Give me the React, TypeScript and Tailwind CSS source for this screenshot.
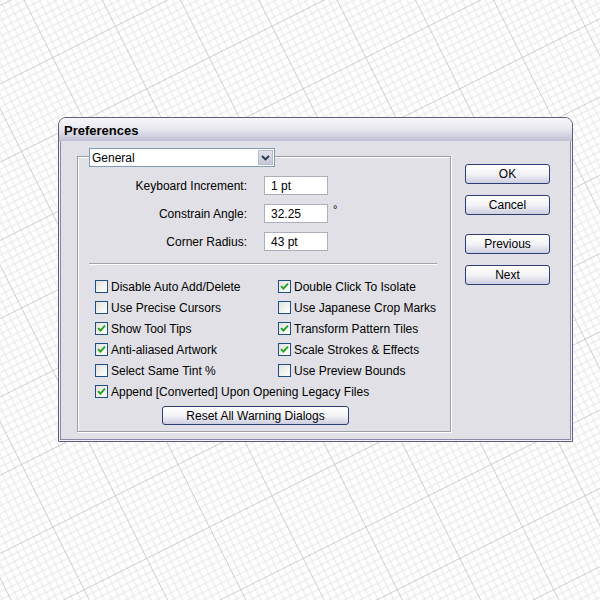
import React from "react";

const FONT = { fontFamily: '"Liberation Sans", Arial, sans-serif' };

function GridBackdrop() {
  const minor = Array.from({ length: 10 }, (_, i) => i * 7);
  return (
    <svg className="absolute inset-0" width={600} height={600}>
      <defs>
        <pattern
          id="paper"
          width={70}
          height={70}
          patternUnits="userSpaceOnUse"
          patternTransform="rotate(-26.57) translate(21 4.6)"
        >
          {minor.slice(1).map((p) => (
            <g key={p} stroke="#e5e5e5" strokeWidth={1}>
              <line x1={p} y1={0} x2={p} y2={70} />
              <line x1={0} y1={p} x2={70} y2={p} />
            </g>
          ))}
          <line x1={0} y1={0} x2={0} y2={70} stroke="#c2c2c2" strokeWidth={1.5} />
          <line x1={0} y1={0} x2={70} y2={0} stroke="#c2c2c2" strokeWidth={1.5} />
        </pattern>
      </defs>
      <rect width={600} height={600} fill="#ffffff" />
      <rect width={600} height={600} fill="url(#paper)" />
    </svg>
  );
}

function Btn({ label, className = "" }: { label: string; className?: string }) {
  return (
    <div
      className={
        "flex items-center justify-center rounded-[3px] border border-[#2c3e72] bg-gradient-to-b from-white via-[#f3f3f7] to-[#cdcee0] text-[12px] text-black " +
        className
      }
    >
      {label}
    </div>
  );
}

function Tick() {
  return (
    <svg width={9} height={9} viewBox="0 0 9 9">
      <path d="M1 4.2 L3.4 6.6 L8 1.6" fill="none" stroke="#22a322" strokeWidth={1.9} />
    </svg>
  );
}

function Check({ label, on }: { label: string; on?: boolean }) {
  return (
    <div className="flex h-[21px] items-center gap-[3px] whitespace-nowrap text-[12px] text-black">
      <div className="flex h-[13px] w-[13px] shrink-0 items-center justify-center border border-[#1f4f7e] bg-gradient-to-br from-[#e2e2dc] to-white">
        {on ? <Tick /> : null}
      </div>
      <span>{label}</span>
    </div>
  );
}

function Field({ label, value, unit }: { label: string; value: string; unit?: string }) {
  return (
    <div className="flex h-[19px] items-center text-[12px] text-black">
      <div className="w-[169px] text-right">{label}</div>
      <div className="ml-[17px] flex h-[19px] w-[64px] items-center border border-[#a9b0b9] bg-white pl-[6px]">
        {value}
      </div>
      {unit ? <div className="ml-[5px] -mt-[9px] text-[11px]">{unit}</div> : null}
    </div>
  );
}

export default function App() {
  return (
    <div className="relative h-[600px] w-[600px] overflow-hidden" style={FONT}>
      <GridBackdrop />
      <div className="relative ml-[58px] pt-[117px]">
        <div className="flex h-[325px] w-[515px] flex-col overflow-hidden rounded-t-[8px] border border-[#5d5d7f] bg-[#f2f2f6]">
          {/* title bar */}
          <div className="flex h-[23px] shrink-0 items-center bg-gradient-to-b from-[#f7f7fa] via-[#e6e6ee] to-[#bfc0d3] pl-[5px] pt-[3px] text-[13px] font-bold text-black">
            Preferences
          </div>
          {/* body */}
          <div className="mx-px mb-px flex flex-1 items-start border-x border-b border-[#8a8aa8] bg-[#e1e0e6] pl-[16px] pt-[15px]">
            {/* group box */}
            <div className="flex h-[276px] w-[374px] flex-col border border-[#9e9ea4] shadow-[inset_1px_1px_0_#ffffff,1px_1px_0_#ffffff]">
              <div className="-mt-[9px] ml-[11px] flex h-[19px] w-[186px] items-stretch border border-[#7f9db9] bg-white text-[12px] text-black">
                <div className="flex flex-1 items-center pl-[2px]">General</div>
                <div className="m-px flex w-[15px] items-center justify-center border border-[#b5bccb] bg-gradient-to-b from-[#dfe2ec] to-[#c3c8d8]">
                  <svg width={9} height={6} viewBox="0 0 9 6">
                    <path d="M1 1 L4.5 4.5 L8 1" fill="none" stroke="#2a3552" strokeWidth={1.8} />
                  </svg>
                </div>
              </div>
              <div className="mt-[9px] flex flex-col gap-[9px]">
                <Field label="Keyboard Increment:" value="1 pt" />
                <Field label="Constrain Angle:" value="32.25" unit="°" />
                <Field label="Corner Radius:" value="43 pt" />
              </div>
              <div className="ml-[11px] mr-[13px] mt-[12px] h-px bg-[#a3a3aa] shadow-[0_1px_0_#ffffff]" />
              <div className="ml-[17px] mt-[12px] grid grid-cols-[183px_1fr]">
                <Check label="Disable Auto Add/Delete" />
                <Check label="Double Click To Isolate" on />
                <Check label="Use Precise Cursors" />
                <Check label="Use Japanese Crop Marks" />
                <Check label="Show Tool Tips" on />
                <Check label="Transform Pattern Tiles" on />
                <Check label="Anti-aliased Artwork" on />
                <Check label="Scale Strokes & Effects" on />
                <Check label="Select Same Tint %" />
                <Check label="Use Preview Bounds" />
              </div>
              <div className="ml-[17px]">
                <Check label="Append [Converted] Upon Opening Legacy Files" on />
              </div>
              <div className="ml-[84px] mt-[4px]">
                <Btn label="Reset All Warning Dialogs" className="h-[19px] w-[187px]" />
              </div>
            </div>
            {/* buttons */}
            <div className="ml-[14px] mt-[8px] flex flex-col">
              <Btn label="OK" className="h-[20px] w-[85px]" />
              <Btn label="Cancel" className="mt-[11px] h-[20px] w-[85px]" />
              <Btn label="Previous" className="mt-[19px] h-[20px] w-[85px]" />
              <Btn label="Next" className="mt-[11px] h-[20px] w-[85px]" />
            </div>
          </div>
        </div>
      </div>
    </div>
  );
}
